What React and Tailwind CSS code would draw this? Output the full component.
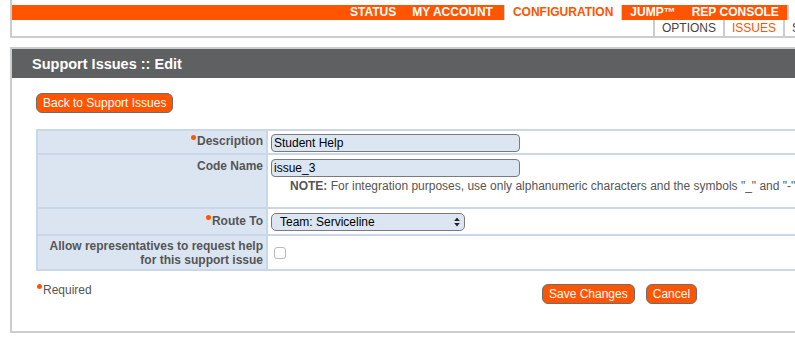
import React from 'react';

const Dot = () => (
  <span className="inline-block w-[5px] h-[5px] rounded-full bg-[#ff5500] align-top mt-[1px] mr-[1px]" />
);

const OrangeButton = ({ children }) => (
  <button
    type="button"
    className="block h-[20px] px-[6px] rounded-[6px] border border-[#6e6e6e] bg-[#ff5500] text-white text-[12px] leading-[18px]"
  >
    {children}
  </button>
);

const Row = ({ label, labelClass = 'pt-[3px]', valueClass = 'pt-[3px]', first, children }) => (
  <div className={first ? 'flex' : 'flex border-t-2 border-[#c9d7e9]'}>
    <div
      className={`w-[230px] shrink-0 bg-[#dbe5f1] border-r-2 border-[#c9d7e9] pr-[3px] text-right text-[12px] font-bold leading-[14px] text-[#555555] ${labelClass}`}
    >
      {label}
    </div>
    <div className={`flex-1 pl-[3px] ${valueClass}`}>{children}</div>
  </div>
);

const TextField = ({ value }) => (
  <input
    readOnly
    value={value}
    className="block h-[18px] w-[249px] rounded-[4px] border border-[#7a7a7a] bg-[#dce6f2] px-[2px] text-[12px] text-black outline-none"
  />
);

export default function App() {
  const mainNav = ['STATUS', 'MY ACCOUNT'];

  return (
    <div className="w-[795px] h-[346px] overflow-hidden bg-white font-['Liberation_Sans',Arial,sans-serif]">
      <div className="w-[1230px]">
        {/* top navigation */}
        <div className="ml-[10px] border-l-2 border-b-2 border-[#cccccc] pt-[5px]">
          <div className="flex h-[15px] bg-[#ff5500] pl-[330px] text-[12px] font-bold leading-[15px] text-white">
            {mainNav.map((item) => (
              <span key={item} className="px-2">{item}</span>
            ))}
            <span className="ml-[3px] px-2 bg-white text-[#ff5500] border-x border-[#cfcfcf]">CONFIGURATION</span>
            <span className="px-2">JUMP™</span>
            <span className="px-2">REP CONSOLE</span>
            <span className="flex-1 bg-white border-l-2 border-[#cccccc]" />
          </div>
          <div className="flex h-[16px] pl-[641px] text-[12px] leading-[16px]">
            <span className="border-l-2 border-[#cccccc] px-[7px] text-[#444444]">OPTIONS</span>
            <span className="border-l-2 border-[#cccccc] px-[7px] text-[#ff5500]">ISSUES</span>
            <span className="border-l-2 border-[#cccccc] px-[7px] text-[#444444]">SKILLS</span>
          </div>
        </div>

        {/* panel */}
        <div className="mt-[9px] ml-[10px] border-2 border-[#cccccc]">
          <div className="h-[29px] bg-[#5f6062] pl-[20px] text-[14.5px] font-bold leading-[30px] text-white">
            Support Issues :: Edit
          </div>

          <div className="pl-[24px] pt-[15px] pb-[27px]">
            <div className="flex">
              <OrangeButton>Back to Support Issues</OrangeButton>
            </div>

            <div className="mt-[16px] w-[1164px] border-2 border-[#c9d7e9]">
              <Row first label={<><Dot />Description</>} valueClass="pt-[3px] pb-[1px]">
                <TextField value="Student Help" />
              </Row>
              <Row label="Code Name" labelClass="pt-[4px]" valueClass="pt-[4px] pb-[14px]">
                <TextField value="issue_3" />
                <div className="mt-[2px] pl-[19px] whitespace-nowrap text-[12px] leading-[14px] text-[#555555]">
                  <b>NOTE:</b> For integration purposes, use only alphanumeric characters and the symbols "_" and "-"
                </div>
              </Row>
              <Row label={<><Dot />Route To</>} labelClass="pt-[5px]" valueClass="pt-[4px] pb-[3px]">
                <div className="flex h-[18px] w-[194px] items-center justify-between rounded-[5px] border border-[#7a7a7a] bg-[#dce6f2] pl-[8px] pr-[4px] text-[12px] text-black">
                  <span>Team: Serviceline</span>
                  <svg width="6" height="10" viewBox="0 0 6 10">
                    <path d="M3 0.5 L5.8 4 L0.2 4 Z" fill="#222" />
                    <path d="M3 9.5 L5.8 6 L0.2 6 Z" fill="#222" />
                  </svg>
                </div>
              </Row>
              <Row label={<>Allow representatives to request help<br />for this support issue</>} labelClass="pt-[3px] pb-[2px]" valueClass="flex items-center">
                <span className="ml-[3px] block h-[12px] w-[12px] rounded-[3px] border border-[#bbbbbb] bg-white" />
              </Row>
            </div>

            <div className="mt-[12px] flex items-start">
              <div className="w-[506px] pl-[1px] text-[12px] leading-[14px] text-[#555555]">
                <Dot />Required
              </div>
              <div className="mt-[1px] flex gap-[11px]">
                <OrangeButton>Save Changes</OrangeButton>
                <OrangeButton>Cancel</OrangeButton>
              </div>
            </div>
          </div>
        </div>
      </div>
    </div>
  );
}
